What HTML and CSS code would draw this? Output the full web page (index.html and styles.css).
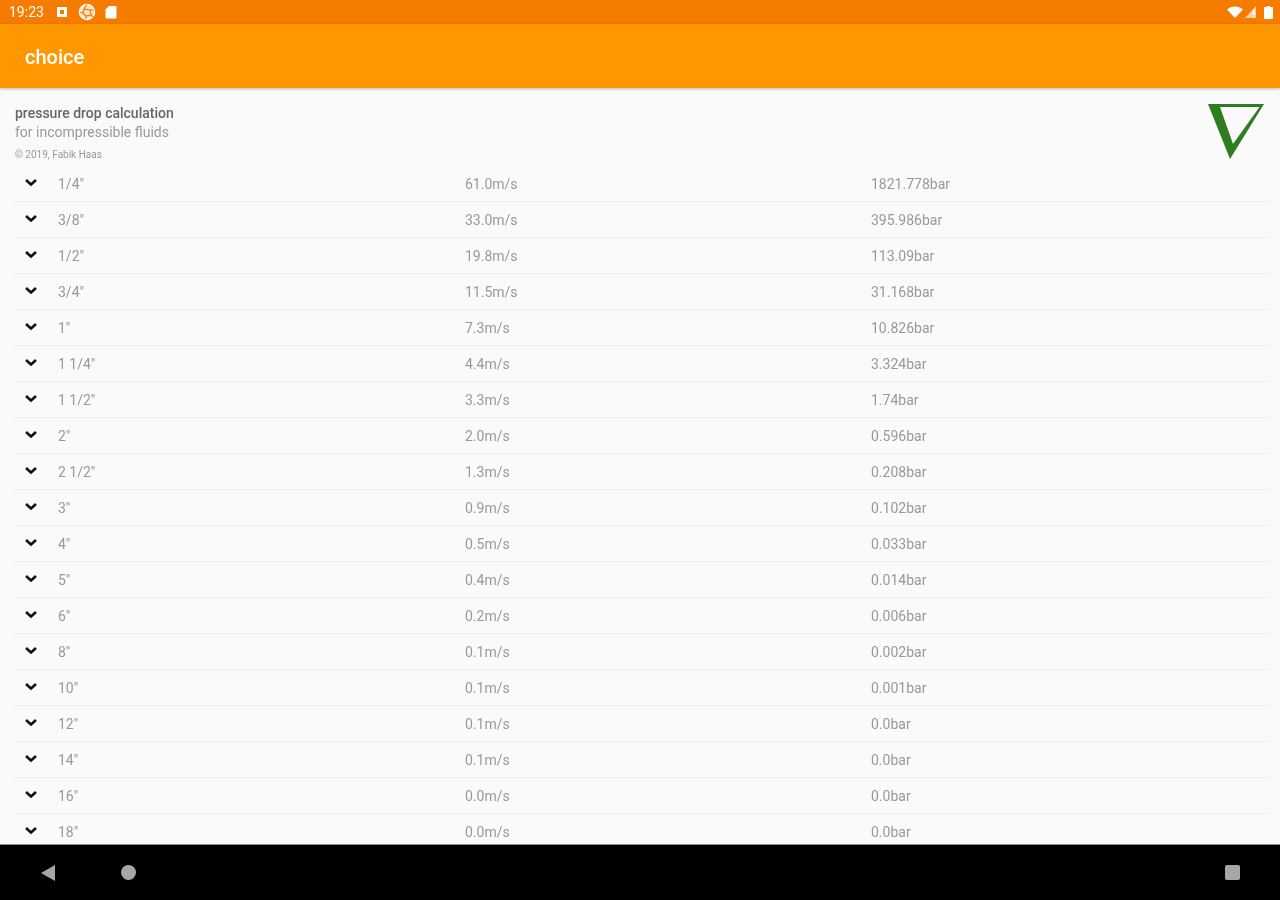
FILE: index.html
```html
<!DOCTYPE html>
<html lang="en">
<head>
<meta charset="utf-8">
<title>choice</title>
<link rel="stylesheet" href="styles.css">
</head>
<body>
<div class="screen">
  <header class="status">
    <div class="status-left">
      <span class="clock">19:23</span>
      <svg class="ic" width="12" height="12" viewBox="0 0 12 12"><path fill="#fff" fill-rule="evenodd" d="M1.500 1h9a.5.5 0 0 1 .5.5v9a.5.5 0 0 1-.5.5h-9a.5.5 0 0 1-.5-.5v-9a.5.5 0 0 1 .5-.5zM4 4v4h4V4z"/></svg>
      <svg class="ic ball" width="18" height="18" viewBox="0 0 18 18"><circle cx="9" cy="9" r="7.500" fill="#fff" fill-opacity=".75" stroke="#fff" stroke-width="1.500"/><path d="M6 6l6 1 1 5-5 1-3-3zM9 1.500L6 6M16 7l-4 0M13 12l2 2M8 13l0 3M5 10l-3-1" fill="none" stroke="#f57c00" stroke-width="1.200"/></svg>
      <svg class="ic" width="12" height="14" viewBox="0 0 12 14"><path fill="#fff" d="M4 1h6.500a1 1 0 0 1 1 1v10.500a1 1 0 0 1-1 1h-9a1 1 0 0 1-1-1V4.500z"/></svg>
    </div>
    <div class="status-right">
      <svg width="16" height="12" viewBox="0 0 16 12"><path fill="#fff" d="M0 3.500C4-.500 12-.500 16 3.500L8 12z"/></svg>
      <svg class="signal" width="11" height="12" viewBox="0 0 11 12"><path fill="#fff" fill-opacity=".65" d="M11 0v12H0z"/><path fill="#fff" d="M8 3h1.500v6H8zM8 10h1.500v1.500H8z"/></svg>
      <svg width="9" height="13" viewBox="0 0 9 13"><path fill="#fff" d="M3 0h3v1h2a1 1 0 0 1 1 1v10a1 1 0 0 1-1 1H1a1 1 0 0 1-1-1V2a1 1 0 0 1 1-1h2z"/></svg>
    </div>
  </header>
  <div class="appbar"><h1 class="title">choice</h1></div>
  <main class="content">
    <section class="intro">
      <div class="intro-text">
        <p class="heading">pressure drop calculation</p>
        <p class="sub">for incompressible fluids</p>
        <p class="copy">© 2019, Fabik Haas</p>
      </div>
      <svg class="logo" width="58" height="56" viewBox="0 0 58 56"><path fill="#2e7d1e" fill-rule="evenodd" d="M1 1h56L23 56zM13 4l13 37L52.500 4z"/></svg>
    </section>
    <ul class="rows" id="rows"></ul>
  </main>
  <nav class="navbar">
    <svg class="nav-back" width="16" height="18" viewBox="0 0 16 18"><path fill="#a6a6a6" d="M15 1v16L1 9z"/></svg>
    <span class="nav-home"></span>
    <span class="nav-recent"></span>
  </nav>
</div>
<script src="rows.js"></script>
</body>
</html>
```

FILE: rows.js
```js
var data = [
  ['1/4"', '61.0m/s', '1821.778bar'],
  ['3/8"', '33.0m/s', '395.986bar'],
  ['1/2"', '19.8m/s', '113.09bar'],
  ['3/4"', '11.5m/s', '31.168bar'],
  ['1"', '7.3m/s', '10.826bar'],
  ['1 1/4"', '4.4m/s', '3.324bar'],
  ['1 1/2"', '3.3m/s', '1.74bar'],
  ['2"', '2.0m/s', '0.596bar'],
  ['2 1/2"', '1.3m/s', '0.208bar'],
  ['3"', '0.9m/s', '0.102bar'],
  ['4"', '0.5m/s', '0.033bar'],
  ['5"', '0.4m/s', '0.014bar'],
  ['6"', '0.2m/s', '0.006bar'],
  ['8"', '0.1m/s', '0.002bar'],
  ['10"', '0.1m/s', '0.001bar'],
  ['12"', '0.1m/s', '0.0bar'],
  ['14"', '0.1m/s', '0.0bar'],
  ['16"', '0.0m/s', '0.0bar'],
  ['18"', '0.0m/s', '0.0bar']
];
var chevron = '<svg class="chev" width="14" height="9" viewBox="0 0 14 9"><path d="M2 2l5 4.500L12 2" fill="none" stroke="#111" stroke-width="2.600"/></svg>';
document.getElementById('rows').innerHTML = data.map(function (r) {
  return '<li class="row">' + chevron + '<span>' + r[0] + '</span><span>' + r[1] + '</span><span>' + r[2] + '</span></li>';
}).join('');
```

FILE: styles.css
```css
* { box-sizing: border-box; }
html, body { margin: 0; padding: 0; }
body { font-family: Roboto, "Liberation Sans", sans-serif; }
.screen { width: 1280px; height: 900px; display: flex; flex-direction: column; overflow: hidden; background: #fafafa; }

.status { height: 24px; flex: none; background: #f57c00; display: flex; justify-content: space-between; align-items: center; padding: 0 7px 0 9px; color: #fff; }
.status-left { display: flex; align-items: center; }
.status-right { display: flex; align-items: center; gap: 2px; }
.status svg { filter: blur(.4px); }
.signal { margin-right: 6px; }
.clock { font-size: 14px; width: 47px; filter: blur(.7px); }
.ic { margin-right: 9px; }
.ball { margin-left: 1px; }

.appbar { height: 64px; flex: none; background: #ff9800; display: flex; align-items: center; padding: 2px 0 0 25px; box-shadow: 0 1px 3px rgba(0,0,0,.25); position: relative; }
.title { margin: 0; color: #fff; font-size: 20px; font-weight: 500; filter: blur(.6px); }

.content { flex: 1; min-height: 0; overflow: hidden; padding: 0 10px 0 12px; }
.intro { height: 78px; display: flex; justify-content: space-between; padding: 16px 5px 0 3px; }
.intro-text { filter: blur(.7px); }
.intro p { margin: 0; }
.heading { font-size: 14px; font-weight: 500; color: #666; line-height: 19px; }
.sub { font-size: 14px; color: #999; line-height: 19px; }
.copy { font-size: 10px; color: #999; line-height: 26px; }
.logo { margin-top: -1px; filter: blur(.3px); }

.rows { list-style: none; margin: 0; padding: 0; }
.row { height: 36px; display: grid; grid-template-columns: 46px 407px 406px 1fr; align-items: center; border-bottom: 1px solid #eeeeee; font-size: 14px; color: #999; }
.row span { filter: blur(.7px); }
.chev { margin-left: 12px; margin-top: -2px; filter: blur(.4px); }

.navbar { height: 56px; flex: none; background: #000; display: flex; align-items: center; padding: 0 39px 0 40px; position: relative; border-top: 1px solid #888; }
.nav-back { margin-right: 65px; }
.nav-home { width: 15px; height: 15px; border-radius: 50%; background: #a6a6a6; filter: blur(.4px); }
.nav-recent { width: 15px; height: 15px; border-radius: 2px; background: #a6a6a6; margin-left: auto; margin-right: 1px; filter: blur(.4px); }
```
